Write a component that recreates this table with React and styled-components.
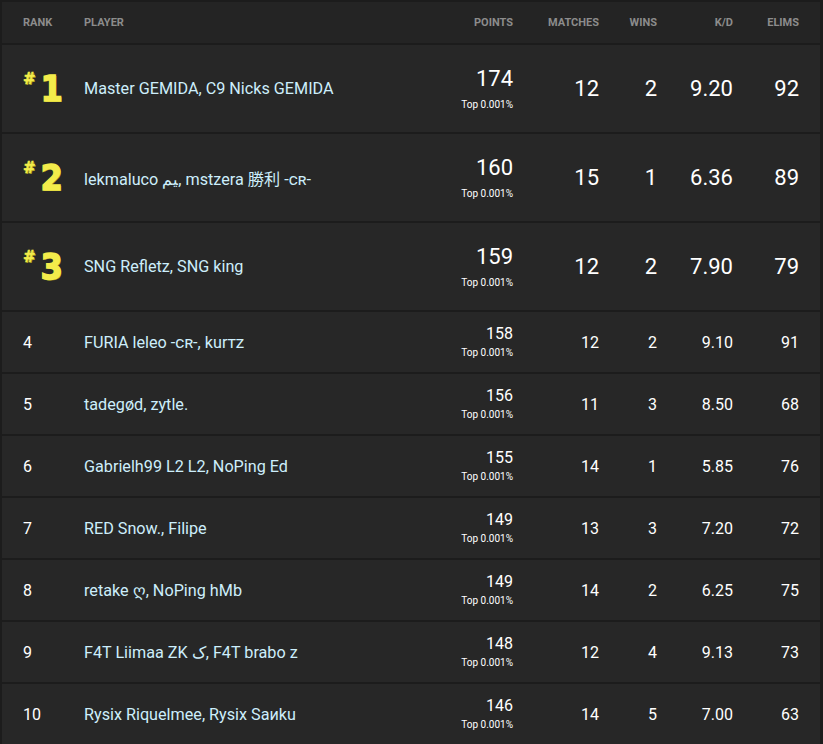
import React from "react";
import styled, { createGlobalStyle } from "styled-components";

const GlobalStyle = createGlobalStyle`
  body {
    margin: 0;
    background: #1c1c1c;
    font-family: Roboto, "Noto Sans", "Noto Sans CJK JP", sans-serif;
  }
`;

const Table = styled.div`
  margin: 2px 3px 0 2px;
  background: #1c1c1c;
  display: flex;
  flex-direction: column;
  gap: 2px;
`;

const Row = styled.div`
  display: grid;
  grid-template-columns: 61px 1fr 100px 86px 58px 76px 66px;
  align-items: center;
  padding: 0 21px;
  height: ${(p) => p.$h}px;
  background: ${(p) => (p.$head ? "#242424" : "#272727")};
`;

const HeadCell = styled.div`
  color: #8c8c8c;
  font-size: 11px;
  font-weight: 700;
  text-transform: uppercase;
  text-align: ${(p) => (p.$left ? "left" : "right")};
`;

const RankCell = styled.div`
  color: #fff;
  font-size: 16px;
`;

const BigRank = styled.div`
  display: flex;
  align-items: flex-start;
  color: #f3ec4b;
  font-family: "DejaVu Sans", sans-serif;
  font-weight: 700;
  line-height: 1;
  text-shadow: 1px 1px 0 #9c961c;
`;

const Hash = styled.span`
  font-size: 15px;
  margin-top: -1px;
  margin-right: 5px;
  -webkit-text-stroke: 0.4px #f3ec4b;
`;

const Digit = styled.span`
  font-size: 32px;
  display: inline-block;
  transform: scaleY(1.1);
  -webkit-text-stroke: 1.3px #f3ec4b;
`;

const Player = styled.div`
  color: #cdeefb;
  font-size: 16.2px;
  white-space: nowrap;
`;

const Small = styled.span`
  font-variant: small-caps;
  text-transform: lowercase;
`;

const Points = styled.div`
  display: flex;
  flex-direction: column;
  align-items: flex-end;
  color: #fff;
`;

const PointsValue = styled.span`
  font-size: ${(p) => (p.$big ? 22 : 16)}px;
  line-height: 1;
`;

const Top = styled.span`
  font-size: 10px;
  margin-top: ${(p) => (p.$big ? 9 : 5)}px;
`;

const Num = styled.div`
  color: #fff;
  text-align: right;
  font-size: ${(p) => (p.$big ? 22 : 16)}px;
`;

const rows = [
  { rank: 1, name: "Master GEMIDA, C9 Nicks GEMIDA", pts: 174, m: 12, w: 2, kd: "9.20", e: 92 },
  { rank: 2, name: <>lekmaluco ﻴﻢ, mstzera 勝利 -<Small>CR</Small>-</>, pts: 160, m: 15, w: 1, kd: "6.36", e: 89 },
  { rank: 3, name: "SNG Refletz, SNG king", pts: 159, m: 12, w: 2, kd: "7.90", e: 79 },
  { rank: 4, name: <>FURIA leleo -<Small>CR</Small>-, kur<Small>TZ</Small></>, pts: 158, m: 12, w: 2, kd: "9.10", e: 91 },
  { rank: 5, name: "tadegød, zytle.", pts: 156, m: 11, w: 3, kd: "8.50", e: 68 },
  { rank: 6, name: "Gabrielh99 L2 L2, NoPing Ed", pts: 155, m: 14, w: 1, kd: "5.85", e: 76 },
  { rank: 7, name: "RED Snow., Filipe", pts: 149, m: 13, w: 3, kd: "7.20", e: 72 },
  { rank: 8, name: "retake ღ, NoPing hMb", pts: 149, m: 14, w: 2, kd: "6.25", e: 75 },
  { rank: 9, name: "F4T Liimaa ZK ک, F4T brabo z", pts: 148, m: 12, w: 4, kd: "9.13", e: 73 },
  { rank: 10, name: "Rysix Riquelmee, Rysix Saиku", pts: 146, m: 14, w: 5, kd: "7.00", e: 63 },
];

export default function App() {
  return (
    <>
      <GlobalStyle />
      <Table>
        <Row $head $h={41}>
          <HeadCell $left>Rank</HeadCell>
          <HeadCell $left>Player</HeadCell>
          <HeadCell>Points</HeadCell>
          <HeadCell>Matches</HeadCell>
          <HeadCell>Wins</HeadCell>
          <HeadCell>K/D</HeadCell>
          <HeadCell>Elims</HeadCell>
        </Row>
        {rows.map((r) => {
          const big = r.rank <= 3;
          return (
            <Row key={r.rank} $h={big ? 87 : 60}>
              {big ? (
                <BigRank>
                  <Hash>#</Hash>
                  <Digit>{r.rank}</Digit>
                </BigRank>
              ) : (
                <RankCell>{r.rank}</RankCell>
              )}
              <Player>{r.name}</Player>
              <Points $big={big}>
                <PointsValue $big={big}>{r.pts}</PointsValue>
                <Top $big={big}>Top 0.001%</Top>
              </Points>
              <Num $big={big}>{r.m}</Num>
              <Num $big={big}>{r.w}</Num>
              <Num $big={big}>{r.kd}</Num>
              <Num $big={big}>{r.e}</Num>
            </Row>
          );
        })}
      </Table>
    </>
  );
}
